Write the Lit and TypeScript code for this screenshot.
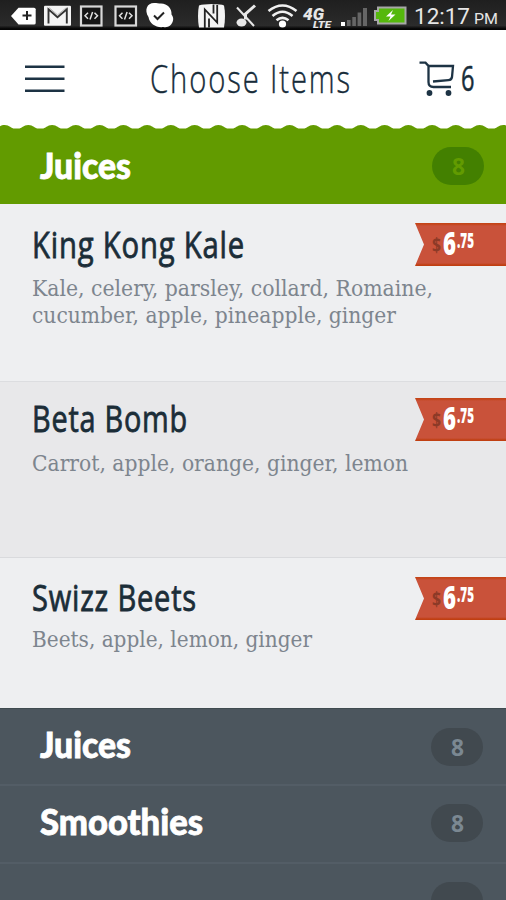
import { LitElement, html, svg, css } from "lit";
import { customElement, property } from "lit/decorators.js";

/** One line of text set to an exact measure, so that it reads as condensed type. */
@customElement("fit-text")
class FitText extends LitElement {
  @property() text = "";
  @property({ type: Number }) measure = 100;
  @property({ type: Number }) height = 44;
  @property({ type: Number }) baseline = 34;
  static styles = css`
    :host { display: block; flex: none; }
    svg { display: block; overflow: visible; }
    text { fill: currentColor; stroke: currentColor; stroke-width: var(--thicken, 0); }
  `;
  render() {
    return html`<svg width=${this.measure} height=${this.height}>
      <text x="0" y=${this.baseline} textLength=${this.measure} lengthAdjust="spacingAndGlyphs">${this.text}</text>
    </svg>`;
  }
}

@customElement("status-bar")
class StatusBar extends LitElement {
  static styles = css`
    :host { display: flex; height: 30px; background: linear-gradient(#1f1f1f, #2b2b2b 85%, #050505 96%); }
    svg { display: block; flex: none; }
    text { font-family: Roboto, sans-serif; fill: #e6e6e6; }
    .net { font-weight: 900; font-style: italic; }
  `;
  icon(x: number, w: number, body: unknown) {
    return html`<svg width=${w} height="30" viewBox="${x} 0 ${w} 30">${body}</svg>`;
  }
  code(x: number) {
    return svg`<rect x=${x + 1} y="6.5" width="20.5" height="19" fill="#151515" stroke="#d8d8d8" stroke-width="2.2"/>
      <path d="M${x + 8} 12.8l-3 3 3 3M${x + 14.5} 12.8l3 3-3 3M${x + 12.6} 12l-2.6 7.5" fill="none" stroke="#e0e0e0" stroke-width="1.5"/>`;
  }
  render() {
    return html`
      ${this.icon(0, 40, svg`<path d="M11 16l7.500-8.300H34q1.700 0 1.700 1.600v13.600q0 1.600-1.700 1.600H18.500z" fill="#fff"/>
        <path d="M22.500 15.500h9M27 11v9" stroke="#222" stroke-width="2"/>`)}
      ${this.icon(40, 36, svg`<rect x="44" y="5.700" width="27" height="20" rx="1" fill="#f4f4f4"/>
        <path d="M48.500 23.500V9.300l9 8 9.300-8v14.200" fill="none" stroke="#333" stroke-width="1.900"/>
        <path d="M49 7.600l8.500 7.300 9-7.300" fill="none" stroke="#999" stroke-width=".7"/>`)}
      ${this.icon(76, 34, this.code(80))}
      ${this.icon(110, 32, this.code(114.5))}
      ${this.icon(142, 50, svg`<path d="M154 3c3 0 4.500 .5 7 .5 6.500 0 11 5 10.500 11 1.500 2 2 4 1.500 6-1 5-5.500 7.500-9.500 6.500-7 1-14-3-15-10C144 10 147 3 154 3z" fill="#fff"/>
        <path d="M154 15.500l3.500 3.500 6.500-6.500" fill="none" stroke="#222" stroke-width="2"/>`)}
      ${this.icon(192, 40, svg`<path d="M199 5.500q4-1.500 13-1.500t12 1.500q1 5 1 10.500t-1 11.500H199q-1-5.500-1-11.500t1-10.500z" fill="#f4f4f4"/>
        <path d="M204.800 28V9.500l12.400 13V5M209 27.500V18.500M213.500 4.500v9" fill="none" stroke="#222" stroke-width="1.800"/>`)}
      ${this.icon(232, 32, svg`<path d="M237 7.500L254 26" stroke="#e8e8e8" stroke-width="2"/>
        <path d="M245.500 19.500V14l9.500-8.500" fill="none" stroke="#e8e8e8" stroke-width="3"/>
        <ellipse cx="241.500" cy="22.500" rx="5" ry="4" fill="#e8e8e8"/>`)}
      ${this.icon(264, 36, svg`<g fill="none" stroke="#f0f0f0" stroke-width="2.600"><path d="M268.500 11q14-11 28 0M272.500 16q10-8.500 20 0M276.500 20.300q6-5 12 0"/></g>
        <circle cx="282.500" cy="24" r="3.600" fill="#fff"/>`)}
      ${this.icon(300, 36, svg`<text class="net" x="303" y="20" font-size="16" textLength="21" lengthAdjust="spacingAndGlyphs">4G</text>
        <text class="net" x="313" y="27.700" font-size="9" textLength="18" lengthAdjust="spacingAndGlyphs">LTE</text>`)}
      ${this.icon(336, 34, svg`<rect x="341" y="22" width="4" height="4" fill="#fff"/>
        <path d="M347 20h3.600v6H347zM352.300 17h3.600v9h-3.600zM357.600 12.500h3.600V26h-3.600zM363 8h4v18h-4z" fill="#666"/>`)}
      ${this.icon(370, 42, svg`<path d="M378 7.500h27.500v16H378v-3.500h-3v-9h3z" fill="#55b80c" stroke="#a8a8a8" stroke-width="2"/>
        <path d="M393 10l-7 6.500h4.500l-2 4.500 7-6.500H391z" fill="#fff"/>`)}
      ${this.icon(412, 94, svg`<text x="414" y="24" font-size="21.500" textLength="56" lengthAdjust="spacingAndGlyphs">12:17</text>
        <text x="474" y="24" font-size="14.500" textLength="24" lengthAdjust="spacingAndGlyphs">PM</text>`)}
    `;
  }
}

const items = [
  { cls: "first", name: "King Kong Kale", w: 213, lines: [["Kale, celery, parsley, collard, Romaine,", 401], ["cucumber, apple, pineapple, ginger", 364]] },
  { cls: "second", name: "Beta Bomb", w: 156, lines: [["Carrot, apple, orange, ginger, lemon", 376]] },
  { cls: "third", name: "Swizz Beets", w: 165, lines: [["Beets, apple, lemon, ginger", 280]] },
];

@customElement("app-root")
class AppRoot extends LitElement {
  static styles = css`
    * { box-sizing: border-box; }
    :host {
      display: flex; flex-direction: column; width: 506px; height: 900px; overflow: hidden;
      background: #4c565e; font-family: "Open Sans", "Noto Sans", sans-serif; color: #172c3a;
    }
    svg { display: block; flex: none; }
    status-bar { flex: none; }
    .header { height: 94px; flex: none; background: #fff; display: flex; align-items: flex-start; padding: 19px 25px 0 25px; }
    .menu { margin: 15px 0 0; }
    .title { font-size: 39px; font-weight: 300; margin-left: 85px; letter-spacing: 2.500px; --thicken: 0.4px; }
    .cart { margin: 10px 0 0 67px; }
    .qty { font-size: 35px; margin-left: 4px; --thicken: 0.5px; }
    .wave { background: #fff; }
    .cat { display: flex; justify-content: space-between; align-items: flex-start; flex: none; color: #fff; padding: 0 22px 0 40px; }
    .label { font-family: Lato, "Open Sans", sans-serif; font-size: 36px; font-weight: 900; --thicken: 0.8px; }
    .green { height: 75px; background: #629b00; padding-top: 15.500px; }
    .badge { width: 52px; height: 38px; border-radius: 19px; display: flex; justify-content: center; font-size: 24px; font-weight: 700; }
    .green .badge { background: #438000; color: #629b00; margin-top: 2px; }
    .dark { background: #4c565e; padding-right: 23px; }
    .dark .badge { background: #41494f; color: #7b8892; }
    .d1 { height: 76px; padding-top: 14.500px; border-top: 1px solid #3f4b50; }
    .d1 .badge { margin-top: 4.500px; }
    .d2 { height: 78px; padding-top: 15px; border-top: 2px solid #535d66; }
    .d2 .badge { margin-top: 3px; }
    .d3 { height: 38px; padding-top: 18px; border-top: 2px solid #535d66; justify-content: flex-end; }
    .item { flex: none; padding-left: 32px; background: #eeeff1; }
    .head { display: flex; justify-content: space-between; height: 44px; }
    .name { font-size: 36.500px; font-weight: 500; color: #1b2d38; letter-spacing: 1px; --thicken: 0.8px; }
    .desc { margin: 7.500px 0 0; font-family: "DejaVu Serif", serif; font-size: 21.500px; color: #7d858e; }
    .first { height: 177px; padding-top: 19px; }
    .first .name { margin-top: 0.500px; }
    .second { height: 176px; padding-top: 16px; background: #e8e8ea; border-top: 1px solid #dcdde0; }
    .third { height: 151px; padding-top: 19px; border-top: 1px solid #d9dadd; }
    .third .desc { margin-top: 5px; }
    .tag { display: flex; width: 91px; height: 43px; padding-left: 17px; background: linear-gradient(#c44418 1px, #c9523a 3px, #c9523a 40px, #c03f12 42px); clip-path: polygon(0 0, 100% 0, 100% 100%, 0 100%, 9px 50%); }
    .cur { font-size: 20px; font-weight: 700; color: #8c3a27; }
    .whole { font-size: 31px; font-weight: 800; color: #fff; margin-left: 2px; }
    .frac { font-size: 20.500px; font-weight: 800; color: #fff; margin-left: 1px; }
  `;
  wave() {
    let d = "M-19.150 1";
    for (let i = 0; i < 23; i++) d += "c5 0 6.500 3.600 10 3.600h3.750c3.500 0 5-3.600 10-3.600";
    return html`<svg class="wave" width="506" height="5" viewBox="0 0 506 5"><path d="${d}V6H-20z" fill="#629b00"/></svg>`;
  }
  badge(show = true) {
    return html`<div class="badge">${show ? html`<fit-text text="8" measure="13" height="38" baseline="28"></fit-text>` : ""}</div>`;
  }
  render() {
    return html`
      <status-bar></status-bar>
      <div class="header">
        <svg class="menu" width="40" height="30" viewBox="0 0 40 30"><path d="M0 2.700h39.500M0 14.700h39.500M0 26.700h39.500" stroke="#1d3344" stroke-width="2.500"/></svg>
        <fit-text class="title" text="Choose Items" measure="202" height="50" baseline="44"></fit-text>
        <svg class="cart" width="38" height="40" viewBox="420 59 38 40">
          <g fill="none" stroke="#1d3344" stroke-width="2.300">
            <path d="M420.500 62.700h6l3 3.300v16q0 5 5 5h17.500"/>
            <path d="M429.500 66H454l-1 11q-.5 3-3.500 3.200L434 81.500"/>
          </g>
          <circle cx="430.500" cy="93" r="2.900" fill="#1d3344"/><circle cx="449.500" cy="93" r="2.900" fill="#1d3344"/>
        </svg>
        <fit-text class="qty" text="6" measure="13.5" height="50" baseline="42"></fit-text>
      </div>
      ${this.wave()}
      <div class="cat green"><fit-text class="label" text="Juices" measure="91"></fit-text>${this.badge()}</div>
      ${items.map((i) => html`
        <div class="item ${i.cls}">
          <div class="head">
            <fit-text class="name" text=${i.name} measure=${i.w}></fit-text>
            <div class="tag">
              <fit-text class="cur" text="$" measure="9" height="43" baseline="29"></fit-text>
              <fit-text class="whole" text="6" measure="13" height="43" baseline="32"></fit-text>
              <fit-text class="frac" text=".75" measure="17" height="43" baseline="25"></fit-text>
            </div>
          </div>
          <div class="desc">${i.lines.map(([t, w]) => html`<fit-text text=${t} measure=${w} height="27.500" baseline="21"></fit-text>`)}</div>
        </div>`)}
      <div class="cat dark d1"><fit-text class="label" text="Juices" measure="91"></fit-text>${this.badge()}</div>
      <div class="cat dark d2"><fit-text class="label" text="Smoothies" measure="163"></fit-text>${this.badge()}</div>
      <div class="cat dark d3">${this.badge(false)}</div>
    `;
  }
}
